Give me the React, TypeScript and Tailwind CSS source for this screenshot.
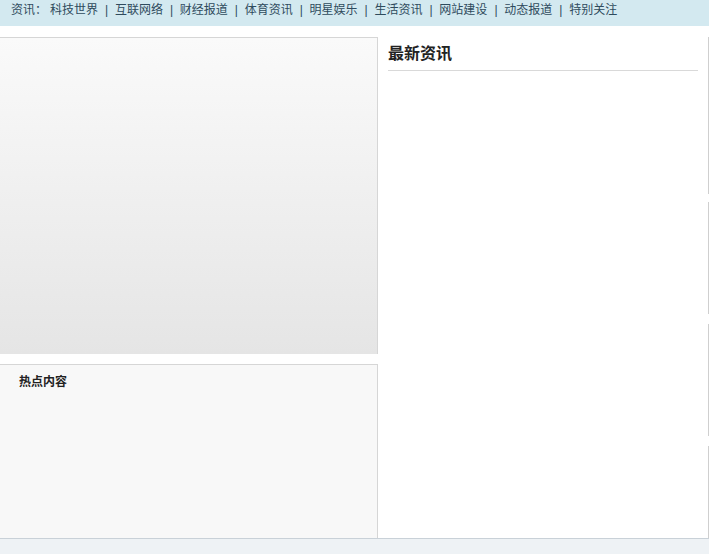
const links = [
  "科技世界",
  "互联网络",
  "财经报道",
  "体育资讯",
  "明星娱乐",
  "生活资讯",
  "网站建设",
  "动态报道",
  "特别关注",
];

const font = { fontFamily: '"Liberation Sans", "Noto Sans CJK SC", sans-serif' };

export default function App() {
  return (
    <div className="w-[709px] h-[554px] bg-white overflow-hidden text-[12px]" style={font}>
      <div className="h-[26px] bg-[#d3e9f0] flex items-start pl-[11px] pt-[2px] leading-[16px] text-[#2f4b5d]">
        <span className="mr-[3px]">资讯：</span>
        {links.map((l, i) => (
          <span key={l} className="flex">
            {i > 0 && <span className="pl-[7px] pr-[6.75px]">|</span>}
            <span>{l}</span>
          </span>
        ))}
      </div>

      <div className="flex mt-[11px] h-[501px]">
        <div className="w-[378px] flex flex-col">
          <div className="h-[317px] border-t border-r border-[#d6d6d6] bg-[linear-gradient(to_bottom,#fafafa,#e5e5e5)]" />
          <div className="h-[10px]" />
          <div className="flex-1 border-t border-r border-[#d6d6d6] bg-[#f8f8f8] pl-[19px] pt-[10px]">
            <h3 className="font-bold text-[12px] text-[#222] leading-[14px]">热点内容</h3>
          </div>
        </div>

        <div className="flex-1 flex">
          <div className="flex-1 pl-[10px] pr-[10px] pt-[6px]">
            <h2 className="font-bold text-[16px] text-[#222] leading-[22px] pb-[5px] border-b border-[#d9d9d9]">
              最新资讯
            </h2>
          </div>
          <div className="w-px flex flex-col">
            <div className="h-[157px] bg-[#cfcfcf]" />
            <div className="h-[8px]" />
            <div className="h-[112px] bg-[#cfcfcf]" />
            <div className="h-[10px]" />
            <div className="h-[112px] bg-[#cfcfcf]" />
            <div className="h-[10px]" />
            <div className="flex-1 bg-[#cfcfcf]" />
          </div>
        </div>
      </div>

      <div className="h-[16px] border-t border-[#c9d1d8] bg-[#eef2f5]" />
    </div>
  );
}
